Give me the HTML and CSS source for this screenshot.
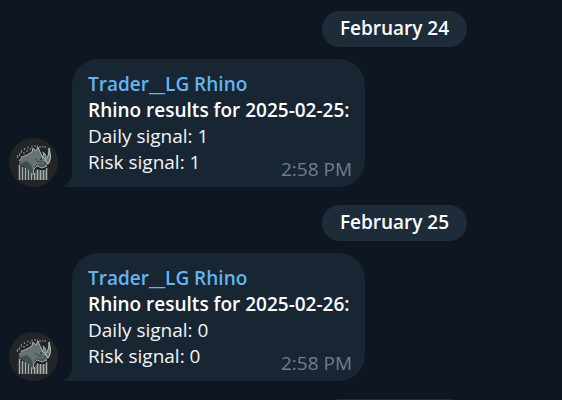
FILE: index.html
```
<!DOCTYPE html>
<html lang="en">
<head>
  <meta charset="UTF-8">
  <meta name="viewport" content="width=device-width, initial-scale=1.0">
  <title>Trader__LG Rhino</title>
  <link rel="stylesheet" href="styles.css">
</head>
<body>
  <!-- shared avatar drawing -->
  <svg class="defs" width="0" height="0" aria-hidden="true">
    <symbol id="rhino" viewBox="0 0 49 49">
      <circle cx="24.5" cy="24.5" r="24.5" fill="#232425"/>
      <path d="M8.5 17v3M10.5 15v3M12.5 18v2M12.5 12v3M15 14v2M15.5 10v2M18 12v2M19 8.500v2M21.500 10v2M23 7.500v2M26 7v2M28.500 7.500v2M31 8v2M33.500 8v1.500M36 8v2" stroke="#7b8586" stroke-width="1.200" fill="none"/>
      <path d="M10.500 27v15M13.500 29v13M16.500 30v12M19.500 31v11M22.500 34v8M25.500 35v7M28.500 31v11M31.500 31v11M34.500 32v10M37.500 30v12" stroke="#a5afae" stroke-width="1.500" fill="none"/>
      <path d="M27 33v9M30 31v11M33 32v10M36 32v10" stroke="#717b7b" stroke-width="1" fill="none"/>
      <path d="M10 26C11 21 14 18 18 17L23 14L24 10L27 13L29 9L31 14L34 19L37 23L39 24L38 28L33 29L28 28L25 31L24 37C21 32 16 29 10 26Z" fill="#647273"/>
      <path d="M18 23L22 27L24 32L24 37C21 32 16 29 10 26Z" fill="#414d4e"/>
      <path d="M26 28C29 28 33 30 38 28L36 32L31 32L27 31L24 37Z" fill="#171b1c"/>
      <path d="M26 21L30 24L34 24M27 27L31 27L36 27" stroke="#364243" stroke-width="1" fill="none"/>
      <path d="M10 23C12 20 14 18 18 17L23 14L24 10L27 13L29 9L31 14L33 18M24 37L25 31L28 28L33 30L38 28" stroke="#aab5b4" stroke-width="1" fill="none"/>
      <path d="M33 19C35 18 35 16 34 14C38 17 37 20 36 21Z" fill="#657172" stroke="#b5bebd" stroke-width="1"/>
      <path d="M36 22C39 20 40 16 40 10C42 17 42 22 39 26Z" fill="#657172" stroke="#c5cecd" stroke-width="1"/>
      <path d="M31 21h2M35 25h2" stroke="#171d1e" stroke-width="1"/>
    </symbol>
  </svg>

  <main class="chat">
    <div class="date-row"><time class="date" datetime="2025-02-24">February 24</time></div>
    <article class="message">
      <svg class="avatar" role="img" aria-label="Trader__LG Rhino"><use href="#rhino"/></svg>
      <div class="bubble">
        <svg class="tail" viewBox="0 0 10 20" aria-hidden="true"><path d="M10 0C10 11 6 17 0 19Q1 20 3 20H10Z"/></svg>
        <div class="sender">Trader__LG Rhino</div>
        <div class="title">Rhino results for 2025-02-25:</div>
        <div>Daily signal: 1</div>
        <div>Risk signal: 1</div>
        <time class="time">2:58 PM</time>
      </div>
    </article>

    <div class="date-row"><time class="date" datetime="2025-02-25">February 25</time></div>
    <article class="message">
      <svg class="avatar" role="img" aria-label="Trader__LG Rhino"><use href="#rhino"/></svg>
      <div class="bubble">
        <svg class="tail" viewBox="0 0 10 20" aria-hidden="true"><path d="M10 0C10 11 6 17 0 19Q1 20 3 20H10Z"/></svg>
        <div class="sender">Trader__LG Rhino</div>
        <div class="title">Rhino results for 2025-02-26:</div>
        <div>Daily signal: 0</div>
        <div>Risk signal: 0</div>
        <time class="time">2:58 PM</time>
      </div>
    </article>

    <div class="date-row"><span class="date"></span></div>
  </main>
</body>
</html>
```
FILE: styles.css
```
* {
  box-sizing: border-box;
}
body {
  height: 100vh;
  margin: 0;
  overflow: hidden;
  background-color: #0e1621;
  color: #f5f5f5;
  font-family: "Open Sans", "Noto Sans", sans-serif;
  font-size: 19px;
  line-height: 26px;
}
.defs {
  position: absolute;
}
.chat {
  height: 100%;
  padding: 11px 9px 0;
  overflow: hidden;
}
.date-row {
  display: flex;
  justify-content: center;
  margin: 0 0 12px 227px;
}
.date {
  min-width: 145px;
  height: 36px;
  padding: 4px 18px;
  border-radius: 18px;
  background-color: #1e2c3a;
  color: #ffffff;
  font-weight: 600;
  text-align: center;
}
.message {
  display: flex;
  align-items: flex-end;
  gap: 14px;
  margin-bottom: 18px;
}
.avatar {
  flex: none;
  width: 49px;
  height: 49px;
}
.bubble {
  position: relative;
  min-width: 293px;
  padding: 12px 15px 12px 16px;
  border-radius: 26px 26px 26px 0;
  background-color: #182533;
}
.tail {
  position: absolute;
  left: -9px;
  bottom: 0;
  width: 10px;
  height: 20px;
  fill: #182533;
}
.sender {
  color: #64b5ef;
  font-weight: 600;
}
.title {
  color: #ffffff;
  font-weight: 600;
}
.time {
  position: absolute;
  right: 13px;
  bottom: 5px;
  color: #6d7f8f;
}
```
